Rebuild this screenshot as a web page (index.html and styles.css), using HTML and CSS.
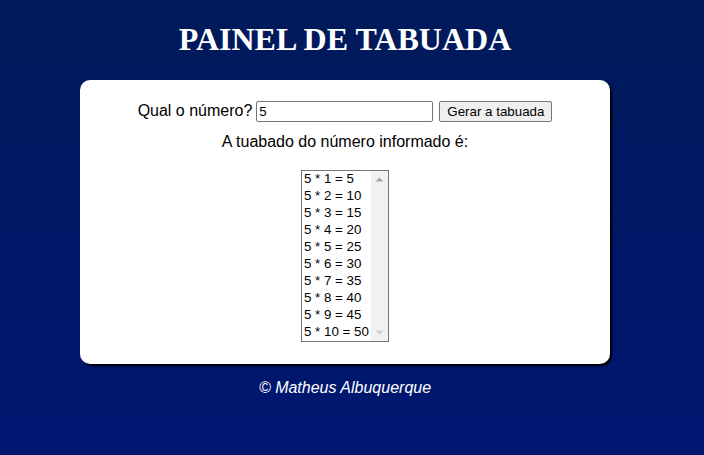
FILE: index.html
```html
<!DOCTYPE html>
<html lang="pt-BR">
<head>
<meta charset="UTF-8">
<title>Painel de Tabuada</title>
<link rel="stylesheet" href="styles.css">
</head>
<body>
<div class="page">
  <header class="header">
    <h1 class="title">PAINEL DE TABUADA</h1>
  </header>
  <main class="card">
    <div class="ask">
      <label for="num" class="ask-label">Qual o número?</label>
      <input type="number" id="num" class="ask-input" value="5">
      <button type="button" class="ask-btn">Gerar a tabuada</button>
    </div>
    <p class="result-label">A tuabado do número informado é:</p>
    <div class="listbox">
      <select class="result-list" size="10">
        <option>5 * 1 = 5</option>
        <option>5 * 2 = 10</option>
        <option>5 * 3 = 15</option>
        <option>5 * 4 = 20</option>
        <option>5 * 5 = 25</option>
        <option>5 * 6 = 30</option>
        <option>5 * 7 = 35</option>
        <option>5 * 8 = 40</option>
        <option>5 * 9 = 45</option>
        <option>5 * 10 = 50</option>
      </select>
      <div class="scrollbar" aria-hidden="true">
        <svg class="arrow" width="17" height="17" viewBox="0 0 17 17"><path d="M4.5 10.5 L8.5 6.5 L12.5 10.5 Z" fill="#a3a3a3"/></svg>
        <svg class="arrow" width="17" height="17" viewBox="0 0 17 17"><path d="M4.5 6.5 L8.5 10.5 L12.5 6.5 Z" fill="#cdcdcd"/></svg>
      </div>
    </div>
  </main>
  <footer class="footer">
    <p class="footer-text">© Matheus Albuquerque</p>
  </footer>
</div>
</body>
</html>
```
FILE: styles.css
```css
html, body {
  margin: 0;
  padding: 0;
  height: 100%;
}
body {
  background: linear-gradient(to bottom, #001a5a, #001672);
  font-family: "Liberation Sans", Arial, sans-serif;
  font-size: 16px;
  color: #000;
}
.page {
  width: 690px;
  display: flex;
  flex-direction: column;
  align-items: center;
}
.header {
  padding-top: 21px;
}
.title {
  margin: 0;
  font-family: "Liberation Serif", "Times New Roman", serif;
  font-size: 32px;
  font-weight: bold;
  line-height: 37px;
  color: #fff;
}
.card {
  margin-top: 22px;
  width: 530px;
  box-sizing: border-box;
  background: #fff;
  border-radius: 10px;
  box-shadow: 2px 2px 2px #000;
  padding: 20px 0 22px;
  display: flex;
  flex-direction: column;
  align-items: center;
}
.ask {
  display: flex;
  align-items: center;
  height: 22px;
}
.ask-label {
  margin-right: 4px;
}
.ask-input {
  -moz-appearance: textfield;
  appearance: textfield;
  box-sizing: border-box;
  width: 177px;
  height: 21px;
  margin: 0 6px 0 0;
  padding: 1px 2px;
  border: 1px solid #767676;
  border-radius: 2px;
  font-family: "Liberation Sans", Arial, sans-serif;
  font-size: 13.33px;
}
.ask-input::-webkit-inner-spin-button,
.ask-input::-webkit-outer-spin-button {
  -webkit-appearance: none;
  margin: 0;
}
.ask-btn {
  box-sizing: border-box;
  height: 21px;
  width: 113px;
  padding: 1px 6px;
  border: 1px solid #767676;
  border-radius: 2px;
  background: #efefef;
  font-family: "Liberation Sans", Arial, sans-serif;
  font-size: 13.33px;
  color: #000;
}
.result-label {
  margin: 11px 0 0;
  line-height: 18px;
}
.listbox {
  margin-top: 19px;
  display: flex;
  width: 88px;
  height: 172px;
  box-sizing: border-box;
  border: 1px solid #767676;
  background: #fff;
}
.result-list {
  flex: 1;
  min-width: 0;
  height: 100%;
  border: none;
  outline: none;
  margin: 0;
  padding: 0;
  overflow: hidden;
  font-family: "Liberation Sans", Arial, sans-serif;
  font-size: 13.33px;
  color: #000;
}
.result-list option {
  padding: 0 2px 1px;
  line-height: 16px;
}
.scrollbar {
  width: 17px;
  background: #f1f1f1;
  display: flex;
  flex-direction: column;
  justify-content: space-between;
}
.arrow {
  display: block;
}
.footer-text {
  margin: 15px 0 0;
  font-style: italic;
  color: #fff;
  line-height: 18px;
}
```
